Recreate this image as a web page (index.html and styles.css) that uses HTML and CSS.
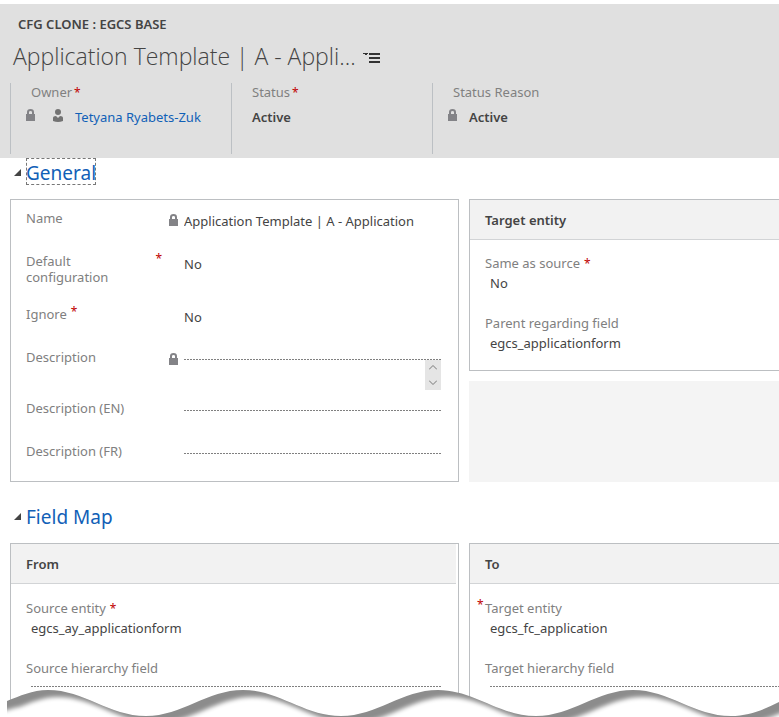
FILE: index.html
```html
<!DOCTYPE html>
<html lang="en">
<head>
<meta charset="utf-8">
<title>Application Template</title>
<link rel="stylesheet" href="styles.css">
</head>
<body>
<svg class="defs" aria-hidden="true">
  <symbol id="lock" viewBox="0 0 9 12"><path d="M0 5h1V3Q1 0 4.500 0T8 3v2h1v7H0zM3 5h3V3.200Q6 2 4.500 2T3 3.200z" fill="#838387" fill-rule="evenodd"/></symbol>
</svg>
<header class="record-header">
  <p class="record-type">CFG CLONE : EGCS BASE</p>
  <div class="title-row">
    <h1 class="title">Application Template | A - Appli...</h1>
    <button class="menu-button" type="button" aria-label="Record menu">
      <svg width="18" height="12" viewBox="0 0 18 12"><path d="M0 1h5v1H4v1H2V2H0zM6 1h11v2H6zM6 5h11v2H6zM6 9h11v2H6z" fill="#333"/></svg>
    </button>
  </div>
  <div class="summary">
    <div class="tile">
      <p class="tile-label">Owner<span class="required">*</span></p>
      <div class="tile-value locked">
        <svg class="lock"><use href="#lock"/></svg>
        <svg class="person" width="10" height="13" viewBox="0 0 10 13"><circle cx="5" cy="3" r="3" fill="#737373"/><path d="M0 12V9q0-2 3-2l2 2 2-2q3 0 3 2v3q-5 2-10 0z" fill="#737373"/></svg>
        <a href="#owner">Tetyana Ryabets-Zuk</a>
      </div>
    </div>
    <div class="tile">
      <p class="tile-label">Status<span class="required">*</span></p>
      <div class="tile-value strong">Active</div>
    </div>
    <div class="tile">
      <p class="tile-label">Status Reason</p>
      <div class="tile-value strong locked"><svg class="lock"><use href="#lock"/></svg>Active</div>
    </div>
  </div>
</header>
<main>
  <section class="section">
    <h2 class="section-title">
      <svg class="arrow" width="7" height="7" viewBox="0 0 7 7"><path d="M7 0v7H0z" fill="#444"/></svg>
      <button class="toggle focused" type="button">General</button>
    </h2>
    <div class="columns">
      <div class="panel fields">
        <div class="row">
          <label class="label" for="name">Name</label>
          <svg class="lock"><use href="#lock"/></svg>
          <input class="text" id="name" value="Application Template | A - Application" readonly>
        </div>
        <div class="row tall">
          <div class="label"><span>Default configuration</span><span class="required">*</span></div>
          <div class="value">No</div>
        </div>
        <div class="row">
          <div class="label">Ignore<span class="required">*</span></div>
          <div class="value">No</div>
        </div>
        <div class="row area">
          <label class="label" for="description">Description</label>
          <svg class="lock"><use href="#lock"/></svg>
          <div class="area-box">
            <textarea id="description" readonly></textarea>
            <div class="scroller">
              <button type="button" aria-label="Scroll up"><svg width="8" height="5" viewBox="0 0 8 5"><path d="M0 4.500l4-4 4 4" fill="none" stroke="#777"/></svg></button>
              <button type="button" aria-label="Scroll down"><svg width="8" height="5" viewBox="0 0 8 5"><path d="M0 .5l4 4 4-4" fill="none" stroke="#777"/></svg></button>
            </div>
          </div>
        </div>
        <div class="row">
          <label class="label" for="description-en">Description (EN)</label>
          <input class="blank" id="description-en">
        </div>
        <div class="row">
          <label class="label" for="description-fr">Description (FR)</label>
          <input class="blank" id="description-fr">
        </div>
      </div>
      <div class="side">
        <div class="panel open">
          <h3 class="panel-title">Target entity</h3>
          <dl class="stack">
            <div><dt>Same as source<span class="required">*</span></dt><dd>No</dd></div>
            <div><dt>Parent regarding field</dt><dd>egcs_applicationform</dd></div>
          </dl>
        </div>
        <div class="placeholder"></div>
      </div>
    </div>
  </section>
  <section class="section">
    <h2 class="section-title">
      <svg class="arrow" width="7" height="7" viewBox="0 0 7 7"><path d="M7 0v7H0z" fill="#444"/></svg>
      <button class="toggle" type="button">Field Map</button>
    </h2>
    <div class="columns">
      <div class="panel inset">
        <h3 class="panel-title">From</h3>
        <div class="stack">
          <dl><dt>Source entity<span class="required">*</span></dt><dd>egcs_ay_applicationform</dd></dl>
          <div class="entry"><label for="source-field">Source hierarchy field</label><input class="blank" id="source-field"></div>
        </div>
      </div>
      <div class="panel open">
        <h3 class="panel-title">To</h3>
        <div class="stack">
          <dl><dt><span class="required before">*</span>Target entity</dt><dd>egcs_fc_application</dd></dl>
          <div class="entry"><label for="target-field">Target hierarchy field</label><input class="blank" id="target-field"></div>
        </div>
      </div>
    </div>
  </section>
</main>
<svg class="torn-edge" viewBox="0 0 779 28" preserveAspectRatio="xMinYMin slice" aria-hidden="true">
  <defs>
    <path id="wave" d="M7 12C20 7 32 1 48 1C84 1 109 27 146 27C182 27 207 1 243 1C279 1 304 27 341 27C377 27 402 1 438 1C474 1 499 27 536 27C572 27 597 1 633 1C669 1 694 27 731 27C750 27 765 20 779 13L840 -12V60H7z"/>
    <clipPath id="below"><use href="#wave"/></clipPath>
    <filter id="soft" x="-5%" y="-50%" width="110%" height="200%"><feGaussianBlur stdDeviation="2"/></filter>
  </defs>
  <path d="M0 14L7 12V28H0z" fill="#fff"/>
  <g clip-path="url(#below)">
    <path d="M0 0H779V28H0z" fill="#8c8c8c"/>
    <g filter="url(#soft)" fill="#fff">
      <use href="#wave" x="10" y="7"/>
      <path d="M-40 34L18 18V67H-40z"/>
    </g>
  </g>
</svg>
</body>
</html>
```
FILE: styles.css
```css
* { box-sizing: border-box; }
body {
  margin: 0;
  padding-top: 4px;
  background: #fff;
  color: #444;
  font: 13px/20px "Noto Sans", "Open Sans", sans-serif;
  overflow-x: hidden;
}
h1, h2, h3, p, dl, dd { margin: 0; font-weight: 400; }
button, input, textarea {
  margin: 0;
  padding: 0;
  border: 0;
  border-radius: 0;
  background: none;
  color: inherit;
  font: inherit;
  outline: 0;
}
svg { display: block; flex: none; }
a { color: #1160b7; text-decoration: none; }
.defs { position: absolute; width: 0; height: 0; }
.lock { width: 9px; height: 12px; }
.required { margin-left: 4px; color: #c00000; font-size: 12px; font-weight: 400; line-height: 16px; }

.record-header { background: #e0e0e0; padding: 10px 0 4px; }
.record-type { padding-left: 18px; font-size: 13px; font-weight: 600; }
.title-row { display: flex; align-items: center; gap: 7px; height: 44px; padding-left: 13px; }
.title { font-family: "Open Sans", "Noto Sans", sans-serif; font-size: 23px; font-weight: 300; line-height: 32px; white-space: nowrap; }
.menu-button { display: flex; padding-top: 4px; }
.summary { display: flex; margin: 5px 0 0 10px; }
.tile { width: 201px; height: 71px; border-left: 1px solid #bcc0c4; }
.tile:first-child { width: 221px; }
.tile-label { height: 18px; padding-left: 20px; color: #808080; line-height: 18px; }
.tile-label .required { margin-left: 2px; }
.tile-value { display: flex; align-items: center; height: 32px; padding-left: 20px; }
.locked { padding-left: 15px; gap: 12px; }
.locked .lock { margin-bottom: 4px; }
.person { margin: 0 0 4px 6px; }
.strong { font-weight: 600; }

.section { margin-bottom: 20px; }
.section:last-child { margin-bottom: 0; }
.section-title { display: flex; align-items: center; gap: 5px; height: 27px; margin-bottom: 14px; padding-left: 14px; }
.arrow { margin-top: 2px; }
.toggle { height: 27px; padding-top: 2px; color: #1160b7; font-size: 19px; line-height: 27px; }
.focused { outline: 1px dashed #777; outline-offset: -1px; }
.columns { display: grid; grid-template-columns: minmax(0, 449fr) minmax(0, 310fr); gap: 10px; padding-left: 10px; }
.panel { border: 1px solid #bcbfc2; background: #fff; }
.open { border-right: 0; }
.panel-title { height: 40px; padding-left: 15px; border-bottom: 1px solid #d2d4d6; background: #f2f2f2; font-size: 13px; font-weight: 600; line-height: 40px; }
.inset .panel-title { margin-right: 2px; }

.fields { display: grid; gap: 10px; padding: 10px 17px 5px 15px; }
.row { display: grid; grid-template-columns: 136px 16px minmax(0, 1fr); column-gap: 3px; min-height: 33px; align-items: start; }
.row .lock { justify-self: center; margin-top: 4px; }
.row > :last-child { grid-column: 3; }
.tall { min-height: 43px; }
.area { min-height: 41px; }
.label { display: flex; color: #808080; line-height: 16px; }
.label .required { margin-top: -2px; }
.value, .text { width: 100%; height: 22px; line-height: 22px; }
.blank, .area-box {
  display: block;
  width: 100%;
  height: 20px;
  margin-top: 10px;
  background: repeating-linear-gradient(90deg, #808080 0 2px, transparent 2px 3px) top / 100% 1px no-repeat;
}
.area-box { display: flex; height: 31px; padding-top: 1px; }
.area-box textarea { flex: 1; min-width: 0; height: 30px; resize: none; overflow: hidden; }
.scroller { display: grid; width: 16px; height: 30px; background: #e5e5e5; }
.scroller button { display: grid; place-items: center; }

.side { display: flex; flex-direction: column; gap: 10px; }
.placeholder { flex: 1; background: #f4f4f4; }
.stack { display: flex; flex-direction: column; gap: 20px; padding: 13px 17px 17px 15px; color: #808080; }
.stack dt { position: relative; }
.stack dd { padding-left: 5px; color: #444; }
.section:last-child .stack { padding-top: 14px; padding-bottom: 0; }
.entry { display: flex; flex-direction: column; padding-left: 5px; }
.entry label { margin-left: -5px; }
.entry .blank { margin-top: 8px; height: 30px; }
.open .entry { margin-right: -17px; }
.before { position: absolute; left: -8px; top: -1px; margin: 0; }

.torn-edge { position: relative; width: 100%; height: 28px; margin-top: -28px; }
```
